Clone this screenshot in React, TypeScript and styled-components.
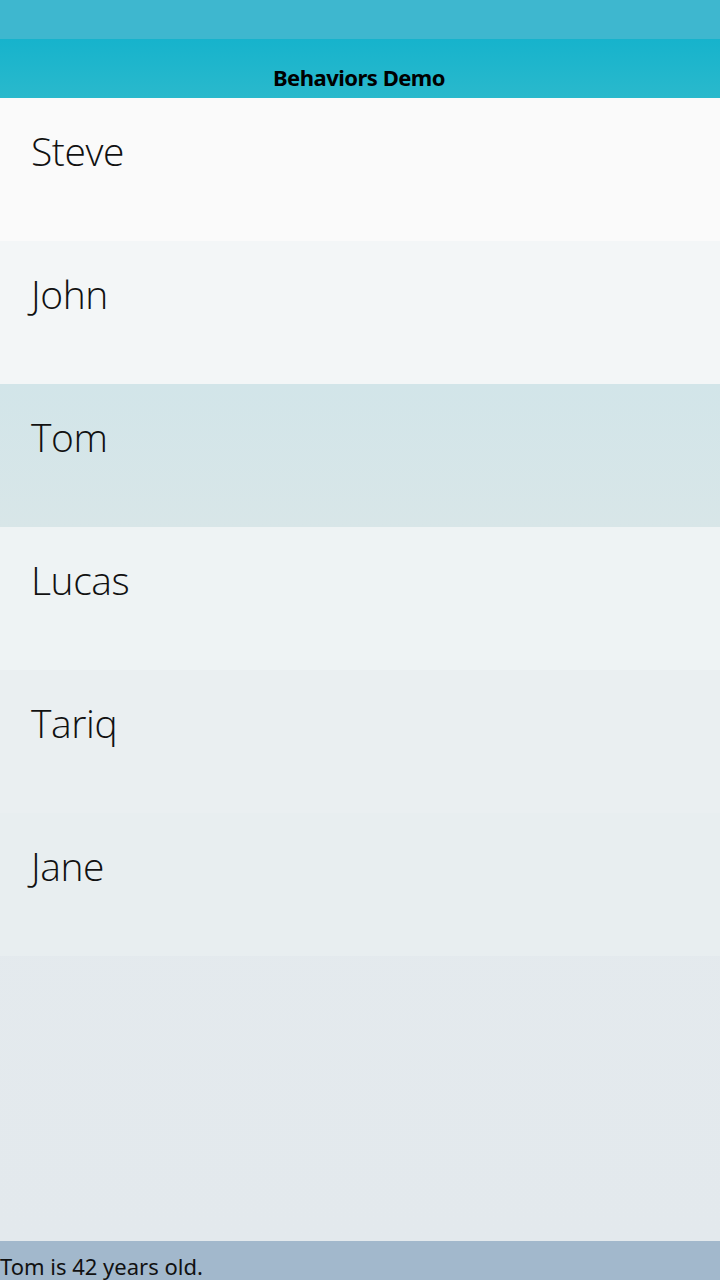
import React from "react";
import styled, { createGlobalStyle } from "styled-components";

const Global = createGlobalStyle`
  html, body { margin: 0; padding: 0; }
  body { font-family: "Open Sans", "Noto Sans", sans-serif; }
`;

const Screen = styled.div`
  width: 720px;
  height: 1280px;
  display: flex;
  flex-direction: column;
  overflow: hidden;
`;

const StatusBar = styled.div`
  height: 39px;
  background: #3eb7cf;
  flex: none;
`;

const Header = styled.header`
  height: 59px;
  flex: none;
  background: linear-gradient(to bottom, #16b3cc, #2ab9cc);
  display: flex;
  align-items: flex-end;
  justify-content: center;
  padding-bottom: 6px;
  box-sizing: border-box;
`;

const Title = styled.h1`
  margin: 0;
  font-family: "Noto Sans", "Open Sans", sans-serif;
  font-weight: 700;
  font-size: 22px;
  line-height: 30px;
  color: #000;
  letter-spacing: -0.5px;
  transform: translateX(-1px);
`;

const List = styled.ul`
  flex: 1;
  margin: 0;
  padding: 0;
  list-style: none;
  background: linear-gradient(to bottom, #e6ecef 0%, #e3e9ed 100%);
`;

const Row = styled.li<{ $bg: string; $selected?: boolean }>`
  height: 143px;
  box-sizing: border-box;
  padding: 26px 0 0 31px;
  background: ${(p) =>
    p.$selected ? "linear-gradient(to bottom, #d2e5e9, #d8e6e8)" : p.$bg};
  font-family: "Open Sans", "Noto Sans", sans-serif;
  font-weight: 300;
  font-size: 39px;
  line-height: 54px;
  letter-spacing: -0.4px;
  color: #111;
`;

const Footer = styled.footer`
  height: 39px;
  flex: none;
  background: #a2b8cc;
  font-family: "Noto Sans", "Open Sans", sans-serif;
  font-size: 22px;
  line-height: 50px;
  color: #111;
  overflow: hidden;
`;

const people = [
  { name: "Steve", age: 30, bg: "#fafafa" },
  { name: "John", age: 35, bg: "#f3f6f7" },
  { name: "Tom", age: 42, bg: "#d4e5e9" },
  { name: "Lucas", age: 27, bg: "#eef3f4" },
  { name: "Tariq", age: 38, bg: "#eaeff1" },
  { name: "Jane", age: 31, bg: "#e8eef0" },
];

export default function App() {
  const selected = "Tom";
  const sel = people.find((p) => p.name === selected)!;
  return (
    <Screen>
      <Global />
      <StatusBar />
      <Header>
        <Title>Behaviors Demo</Title>
      </Header>
      <List>
        {people.map((p) => (
          <Row key={p.name} $bg={p.bg} $selected={p.name === selected}>
            {p.name}
          </Row>
        ))}
      </List>
      <Footer>{`${sel.name} is ${sel.age} years old.`}</Footer>
    </Screen>
  );
}
